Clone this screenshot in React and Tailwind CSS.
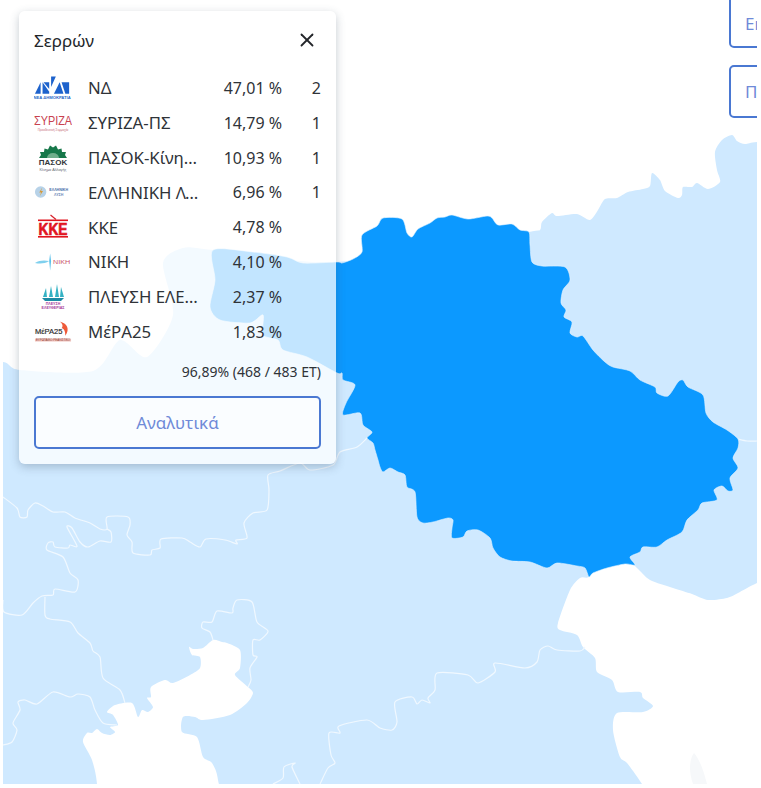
import React from 'react';
import { X } from 'lucide-react';

const LAND = "-40,362 3,362 20,370 93,371 120,340 147,357 173,315 163,263 183,248 213,250 337,262 529,232 540,230 542,222 552,213 557,216 577,214 590,220 598,210 605,199 617,198 628,192 643,189 650,186 652,173 660,180 665,191 678,198 682,195 683,187 692,187 697,183 708,189 720,182 717,170 715,152 722,140 732,135 737,141 745,144 757,142 800,140 800,830 -40,830";

const SERRES = "213,250 253,252 287,257 303,263 337,262 342,263 353,259 362,252 362,235 377,226 383,218 402,219 407,233 412,237 418,229 430,223 437,218 445,217 452,215 468,219 487,216 492,218 498,225 512,224 520,230 529,232 530,245 532,262 542,266 565,267 570,280 563,290 561,303 566,310 564,317 572,322 570,333 577,337 583,336 593,350 605,362 613,367 630,371 640,380 655,387 657,393 668,396 678,382 683,380 688,387 703,395 706,413 713,422 727,430 738,439 738,448 733,458 738,468 730,478 733,490 728,491 722,486 714,490 717,500 702,503 698,510 687,520 682,532 667,540 657,547 643,547 640,552 630,557 635,565 625,564 607,568 593,573 589,577 585,568 577,566 557,563 547,568 530,562 512,561 500,557 493,548 490,538 478,530 467,531 463,537 452,538 452,528 453,520 448,518 433,522 423,523 417,517 415,492 407,487 405,475 398,472 390,468 383,472 380,467 378,460 375,450 373,443 367,438 372,432 363,425 360,413 343,415 346,403 355,385 343,380 342,373 337,373 307,357 283,350 278,340 263,335 263,315 250,323 220,320 210,307 215,280";

const SEA_EAST = "637,568 625,558 600,565 589,577 580,578 570,590 558,623 560,630 577,635 583,647 595,658 597,672 612,680 618,692 640,692 643,698 653,706 643,712 617,713 613,730 620,757 627,763 642,784 670,830 800,830 800,565 757,583 738,593 727,598 708,600 692,594 673,588 650,580";

const GULF = "97,830 97,784 92,760 83,742 87,733 92,733 97,729 102,733 110,735 115,732 110,727 118,725 113,715 107,712 115,705 132,703 138,717 142,710 148,712 153,707 147,698 151,697 151,687 165,680 173,683 190,675 200,668 200,657 192,655 189,647 193,649 203,648 213,640 222,642 227,643 240,650 240,668 235,675 248,687 253,693 247,703 230,715 203,720 195,717 183,717 182,732 197,737 203,757 212,763 218,780 220,830";

const BORDERS = [
  "3,497 17,508 20,517 27,517 28,510 35,503 43,506 53,512 65,512 75,518 90,523 100,529 107,529 107,517 128,517 130,525 127,535 132,542 133,553 150,555 152,550 160,548 161,539 182,538 190,542 200,547 206,539 225,540 237,544 236,540 247,538 244,523 253,513 267,510 269,490 268,475 280,471 300,463 310,470 333,465 340,452 357,447 367,438",
  "107,529 111,532 111,542 100,541 88,547 80,542 72,528 67,527 77,546 70,545 68,548 55,547 53,542 48,543 47,550 63,557 70,573 78,580 75,592 55,589 53,595 42,596 33,603 22,615 4,612 3,600",
  "45,597 45,615 50,619 70,622 78,633 90,643 93,651 100,657 103,678 120,690 125,703",
  "3,745 12,742 17,730 13,723 20,710 18,702 25,700 37,704 53,692 70,697 78,694 90,697 95,710 103,723 117,725",
  "213,640 210,632 202,628 203,622 212,622 217,611 232,613 233,608 237,600 252,602 257,622 268,631 260,640 253,640 253,655 257,657 250,668 251,680 248,687",
  "320,784 328,768 335,763 331,755 329,733 340,733 339,726 367,720 380,728 392,730 397,722 395,702 412,697 417,704 422,700 430,703 428,698 435,690 437,673 468,675 478,683 495,672 495,663 525,668 537,662 540,650 548,646 557,650 580,651 585,647",
  "273,784 283,778 284,767 295,763 292,767 300,784",
  "738,439 747,441 757,441",
];

// catmull-rom through the traced points, so the coastlines don't look faceted
function smooth(str, closed) {
  const p = str.split(' ').map(s => s.split(',').map(Number));
  const n = p.length;
  const at = (i) => closed ? p[(i + n) % n] : p[Math.max(0, Math.min(n - 1, i))];
  let d = `M${p[0][0]} ${p[0][1]}`;
  const last = closed ? n : n - 1;
  for (let i = 0; i < last; i++) {
    const [p0, p1, p2, p3] = [at(i - 1), at(i), at(i + 1), at(i + 2)];
    const k = 0.13;
    d += ` C${p1[0] + (p2[0] - p0[0]) * k} ${p1[1] + (p2[1] - p0[1]) * k} ${p2[0] - (p3[0] - p1[0]) * k} ${p2[1] - (p3[1] - p1[1]) * k} ${p2[0]} ${p2[1]}`;
  }
  return closed ? d + ' Z' : d;
}

function MapCanvas() {
  return (
    <svg viewBox="3 0 754 784" className="block w-[754px] h-[784px]">
      <path d={smooth(LAND, true)} fill="#cfe9ff" />
      <path d={smooth(SEA_EAST, true)} fill="#ffffff" />
      <path d={smooth(GULF, true)} fill="#ffffff" />
      <path d="M693 784 C688 770 690 758 694 753 C700 760 704 772 707 784 Z" fill="#f6f8fa" />
      {BORDERS.map((pts, i) => (
        <path key={i} d={smooth(pts, false)} fill="none" stroke="#f0f8ff" strokeWidth="1.2" />
      ))}
      <path d={smooth(SERRES, true)} fill="#0c99ff" stroke="#e4f3ff" strokeWidth="0.6" />
    </svg>
  );
}

function LogoNd() {
  return (
    <svg width="40" height="26" viewBox="0 0 40 26" className="font-['Liberation_Sans',sans-serif]">
      <g fill="#1d62cc">
        <polygon points="1,19 7,7 7,19" />
        <polygon points="9,19 9,7 16,17 16,19" />
        <polygon points="10,7 16,7 16,14" />
        <polygon points="18,19 18,1 23,1 18,12" />
        <polygon points="21,19 27,7 31,19" />
        <polygon points="29,7 37,7 37,19 33,19" />
      </g>
      <text x="19" y="25" textAnchor="middle" fontSize="4.4" fontWeight="700" fill="#2a68c8">ΝΕΑ ΔΗΜΟΚΡΑΤΙΑ</text>
    </svg>
  );
}

function LogoSyriza() {
  return (
    <svg width="40" height="22" viewBox="0 0 40 22" className="font-['Liberation_Sans',sans-serif]">
      <text x="0" y="13.5" fontSize="13" fill="#c8414f" textLength="40" lengthAdjust="spacingAndGlyphs">ΣΥΡΙΖΑ</text>
      <text x="20" y="19" textAnchor="middle" fontSize="3.2" fill="#c8707a">Προοδευτική Συμμαχία</text>
    </svg>
  );
}

function LogoPasok() {
  return (
    <svg width="34" height="28" viewBox="0 0 34 28" className="font-['Liberation_Sans',sans-serif]">
      <path d="M3 14 L5 11 L4 8 L8 8 L8.5 4.5 L12 5.5 L14 1.5 L17 3.5 L20 1.5 L22 5.5 L25.5 4.5 L26 8 L30 8 L29 11 L31 14 Z" fill="#17784a" />
      <path d="M11 14 A6 5 0 0 1 23 14 Z" fill="#6fae8b" />
      <text x="17" y="21" textAnchor="middle" fontSize="8" fontWeight="700" fill="#33363a">ΠΑΣΟΚ</text>
      <text x="17" y="26.5" textAnchor="middle" fontSize="3.8" fill="#666a70">Κίνημα Αλλαγής</text>
    </svg>
  );
}

function LogoElliniki() {
  return (
    <svg width="40" height="16" viewBox="0 0 40 16" className="font-['Liberation_Sans',sans-serif]">
      <circle cx="7" cy="8" r="6" fill="#b7d2e8" />
      <path d="M8.5 3.5 L5.5 8.5 L7.5 8.5 L6 12.5 L9.5 7 L7.5 7 Z" fill="#d59a3a" />
      <text x="26" y="6.5" textAnchor="middle" fontSize="3.8" fontWeight="700" fill="#4b6ea8">ΕΛΛΗΝΙΚΗ</text>
      <text x="26" y="12.5" textAnchor="middle" fontSize="3.8" fontWeight="700" fill="#6c88b8">ΛΥΣΗ</text>
    </svg>
  );
}

function LogoKke() {
  return (
    <svg width="32" height="28" viewBox="0 0 32 28" className="font-['Liberation_Sans',sans-serif]">
      <path d="M14 5 A3.6 3.6 0 1 0 20 1 A3 3 0 1 1 14 5 Z" fill="#d6202a" />
      <line x1="13.5" y1="2" x2="19" y2="6.5" stroke="#d6202a" strokeWidth="1.2" />
      <rect x="1" y="6.5" width="30" height="1.6" fill="#e1141f" />
      <text x="16" y="21.5" textAnchor="middle" fontSize="17" fontWeight="700" fill="#e1141f" stroke="#e1141f" strokeWidth="0.7" textLength="29" lengthAdjust="spacingAndGlyphs">KKE</text>
      <rect x="1" y="23" width="30" height="1.6" fill="#e1141f" />
    </svg>
  );
}

function LogoNiki() {
  return (
    <svg width="40" height="20" viewBox="0 0 40 20" className="font-['Liberation_Sans',sans-serif]">
      <path d="M1 11 C6 8 11 8 16 9 C11 12 6 12 1 11 Z" fill="#7fd0ee" />
      <path d="M17 1 L18 9 L17 19 L16 9 Z" fill="#58c0ea" />
      <text x="20" y="12" fontSize="6" fill="#c9506a" textLength="18" lengthAdjust="spacingAndGlyphs">NIKH</text>
    </svg>
  );
}

function LogoPlefsi() {
  return (
    <svg width="24" height="28" viewBox="0 0 24 28" className="font-['Liberation_Sans',sans-serif]">
      <g fill="#35b2c4">
        <polygon points="2,14 5,5 6,14" />
        <polygon points="8,14 10,3 12,14" />
        <polygon points="14,14 16,1 18,14" />
        <polygon points="19,14 20,4 23,14" />
      </g>
      <path d="M1 15 L23 15 L20 18 L4 18 Z" fill="#1b8aa4" />
      <text x="12" y="22" textAnchor="middle" fontSize="3.6" fontWeight="700" fill="#a5389a">ΠΛΕΥΣΗ</text>
      <text x="12" y="26" textAnchor="middle" fontSize="3.6" fontWeight="700" fill="#a5389a">ΕΛΕΥΘΕΡΙΑΣ</text>
    </svg>
  );
}

function LogoMera() {
  return (
    <svg width="40" height="24" viewBox="0 0 40 24" className="font-['Liberation_Sans',sans-serif]">
      <text x="1" y="14" fontSize="8.5" fill="#2b2b2b" stroke="#2b2b2b" strokeWidth="0.2" textLength="29" lengthAdjust="spacingAndGlyphs">ΜέΡΑ25</text>
      <path d="M27 1 C35 3 38 9 33 16 C33 10 31 8 29 8 C31 6 30 3 27 1 Z" fill="#ee5a3a" />
      <rect x="1" y="19" width="38" height="3" fill="#f0c2bb" />
      <text x="20" y="21.6" textAnchor="middle" fontSize="3" fill="#8a3a30">ΕΥΡΩΠΑΙΚΟ ΡΕΑΛΙΣΤΙΚΟ</text>
    </svg>
  );
}

const parties = [
  { name: 'ΝΔ', pct: '47,01 %', seats: '2', Logo: LogoNd },
  { name: 'ΣΥΡΙΖΑ-ΠΣ', pct: '14,79 %', seats: '1', Logo: LogoSyriza },
  { name: 'ΠΑΣΟΚ-Κίνημα Αλλαγής', pct: '10,93 %', seats: '1', Logo: LogoPasok },
  { name: 'ΕΛΛΗΝΙΚΗ ΛΥΣΗ', pct: '6,96 %', seats: '1', Logo: LogoElliniki },
  { name: 'ΚΚΕ', pct: '4,78 %', seats: '', Logo: LogoKke },
  { name: 'ΝΙΚΗ', pct: '4,10 %', seats: '', Logo: LogoNiki },
  { name: 'ΠΛΕΥΣΗ ΕΛΕΥΘΕΡΙΑΣ', pct: '2,37 %', seats: '', Logo: LogoPlefsi },
  { name: 'ΜέΡΑ25', pct: '1,83 %', seats: '', Logo: LogoMera },
];

export default function App() {
  return (
    <div className="w-[761px] h-[788px] bg-white font-['Noto_Sans','Open_Sans',sans-serif] text-[#2f3338]">
      <div className="relative ml-[3px] w-[754px] h-[784px] overflow-hidden">
        <MapCanvas />

        {/* buttons run off the right edge of the map */}
        <div className="absolute left-[726px] top-[-5px] flex flex-col gap-[17px]">
          <button className="w-[140px] h-[53px] pt-[4px] border-2 border-[#4a78d2] rounded-[5px] bg-white text-left pl-[14px] text-[17px] text-[#6f8ad8]">Εκλογικές</button>
          <button className="w-[140px] h-[53px] border-2 border-[#4a78d2] rounded-[5px] bg-white text-left pl-[14px] text-[17px] text-[#6f8ad8]">Περιφέρειες</button>
        </div>

        <div className="absolute left-[16px] top-[11px] w-[317px] rounded-[6px] bg-white/75 shadow-[0_3px_10px_rgba(60,80,100,0.3)] pl-[15px] pr-[15px] pb-[15px]">
          <div className="flex items-center justify-between h-[59.6px]">
            <span className="text-[17px] text-[#23262a]">Σερρών</span>
            <X size={22} strokeWidth={2} className="text-[#23262a] mr-[3px] mb-[2px]" />
          </div>

          {parties.map(({ name, pct, seats, Logo }) => (
            <div key={name} className="flex items-center h-[34.8px] text-[16px]">
              <div className="w-[54px] pr-[16px] flex justify-center shrink-0">
                <Logo />
              </div>
              <span className="w-[112px] truncate text-[16.8px]">{name}</span>
              <span className="flex-1 text-right">{pct}</span>
              <span className="w-[39px] text-right">{seats}</span>
            </div>
          ))}

          <div className="mt-[13px] h-[20px] leading-[20px] text-right text-[14px]">96,89% (468 / 483 ET)</div>

          <button className="mt-[14px] pt-[1px] w-full h-[53px] border-2 border-[#4a78d2] rounded-[5px] bg-white/60 text-[17px] text-[#6f8ad8]">Αναλυτικά</button>
        </div>
      </div>
    </div>
  );
}
